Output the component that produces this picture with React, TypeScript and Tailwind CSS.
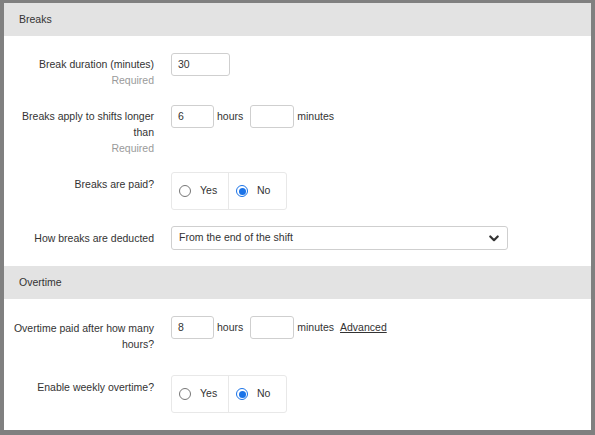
import React from "react";

const font = { fontFamily: '"Liberation Sans", Arial, sans-serif' };

function SectionHeader({ title }: { title: string }) {
  return (
    <div className="h-[33px] shrink-0 bg-[#e3e3e3] pl-[15px] flex items-center text-[10.5px] text-[#333]">
      {title}
    </div>
  );
}

function Label({ children, required }: { children: React.ReactNode; required?: boolean }) {
  return (
    <div className="w-[150px] shrink-0 pl-[4px] text-right leading-[16px]">
      <div className="text-[#333]">{children}</div>
      {required && <div className="text-[#9a9a9a]">Required</div>}
    </div>
  );
}

function TextBox({ value, w }: { value?: string; w: string }) {
  return (
    <div className={`${w} h-[23px] shrink-0 border border-[#cfcfcf] rounded-[3px] bg-white pl-[6px] flex items-center text-[#333]`}>
      {value}
    </div>
  );
}

function Radio({ checked }: { checked?: boolean }) {
  if (checked) {
    return (
      <span className="w-[12px] h-[12px] rounded-full border-[1.5px] border-[#1a73e8] flex items-center justify-center">
        <span className="w-[7px] h-[7px] rounded-full bg-[#1a73e8]" />
      </span>
    );
  }
  return <span className="w-[12px] h-[12px] rounded-full border border-[#767676] bg-white" />;
}

function YesNo() {
  return (
    <div className="w-[116px] h-[38px] border border-[#e8e8e8] rounded-[3px] flex">
      <div className="w-[57px] flex items-center pl-[7px] gap-[9px] border-r border-[#e8e8e8]">
        <Radio />
        <span className="text-[#333]">Yes</span>
      </div>
      <div className="flex items-center pl-[7px] gap-[9px]">
        <Radio checked />
        <span className="text-[#333]">No</span>
      </div>
    </div>
  );
}

function HoursMinutes({ hours, advanced }: { hours: string; advanced?: boolean }) {
  return (
    <div className="flex items-center text-[#333]">
      <TextBox value={hours} w="w-[43px]" />
      <span className="ml-[3px]">hours</span>
      <div className="ml-[7px]">
        <TextBox w="w-[44px]" />
      </div>
      <span className="ml-[3px]">minutes</span>
      {advanced && <span className="ml-[6px] underline">Advanced</span>}
    </div>
  );
}

export default function App() {
  return (
    <div
      className="w-[595px] h-[435px] bg-[#808080] pt-[3px] pl-[4px] pr-[4px] pb-[5px] text-[10.5px]"
      style={font}
    >
      <div className="w-full h-full bg-white flex flex-col">
        <SectionHeader title="Breaks" />
        <div className="pt-[17px] flex flex-col">
          {/* Break duration */}
          <div className="h-[52px] flex items-start gap-[17px]">
            <div className="pt-[3px]">
              <Label required>Break duration (minutes)</Label>
            </div>
            <TextBox value="30" w="w-[59px]" />
          </div>

          {/* Shift length */}
          <div className="h-[67px] flex items-start gap-[17px]">
            <div className="pt-[3px]">
              <Label required>Breaks apply to shifts longer than</Label>
            </div>
            <HoursMinutes hours="6" />
          </div>

          {/* Paid */}
          <div className="h-[54px] flex items-start gap-[17px]">
            <div className="pt-[4px]">
              <Label>Breaks are paid?</Label>
            </div>
            <YesNo />
          </div>

          {/* Deducted */}
          <div className="h-[40px] flex items-start gap-[17px]">
            <div className="pt-[4px]">
              <Label>How breaks are deducted</Label>
            </div>
            <div className="w-[337px] h-[24px] border border-[#cfcfcf] rounded-[3px] pl-[7px] pr-[8px] flex items-center justify-between text-[#333]">
              <span>From the end of the shift</span>
              <svg width="10" height="7" viewBox="0 0 10 7" fill="none">
                <path d="M1.3 1.5 L5 5.2 L8.7 1.5" stroke="#333" strokeWidth="2.2" strokeLinecap="round" strokeLinejoin="round" />
              </svg>
            </div>
          </div>
        </div>

        <SectionHeader title="Overtime" />
        <div className="pt-[17px] flex flex-col">
          <div className="h-[59px] flex items-start gap-[17px]">
            <div className="pt-[4px]">
              <Label>Overtime paid after how many hours?</Label>
            </div>
            <HoursMinutes hours="8" advanced />
          </div>
          <div className="flex items-start gap-[17px]">
            <div className="pt-[4px]">
              <Label>Enable weekly overtime?</Label>
            </div>
            <YesNo />
          </div>
        </div>
      </div>
    </div>
  );
}
